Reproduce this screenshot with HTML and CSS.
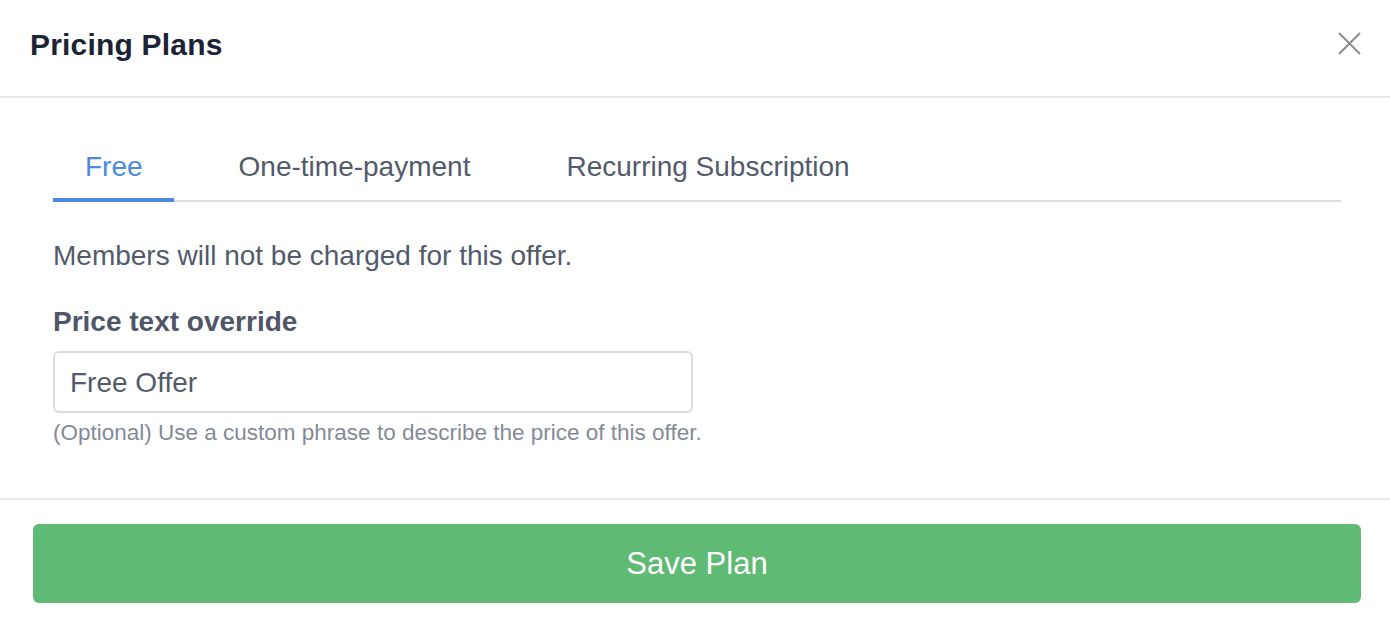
FILE: index.html
```html
<!DOCTYPE html>
<html lang="en">
<head>
<meta charset="utf-8">
<title>Pricing Plans</title>
<link rel="stylesheet" href="styles.css">
</head>
<body>
<div class="modal">
  <header class="modal-header">
    <h1 class="modal-title">Pricing Plans</h1>
    <button class="close-btn" aria-label="Close">
      <svg width="23" height="23" viewBox="0 0 23 23"><path d="M1 1 L22 22 M22 1 L1 22" stroke="#8c8c8c" stroke-width="2" fill="none"/></svg>
    </button>
  </header>
  <section class="modal-body">
    <nav class="tabs">
      <div class="tab active">Free</div>
      <div class="tab">One-time-payment</div>
      <div class="tab">Recurring Subscription</div>
    </nav>
    <p class="note">Members will not be charged for this offer.</p>
    <label class="field-label">Price text override</label>
    <div class="input">Free Offer</div>
    <p class="help">(Optional) Use a custom phrase to describe the price of this offer.</p>
  </section>
  <footer class="modal-footer">
    <button class="save-btn">Save Plan</button>
  </footer>
</div>
</body>
</html>
```

FILE: styles.css
```css
* { box-sizing: border-box; }
html, body {
  margin: 0;
  padding: 0;
  background: #ffffff;
  font-family: "Liberation Sans", Arial, sans-serif;
}
.modal {
  width: 1390px;
  height: 626px;
  overflow: hidden;
}
.modal-header {
  height: 98px;
  display: flex;
  align-items: center;
  justify-content: space-between;
  padding: 0 29px 6px 30px;
  border-bottom: 2px solid #e7e7e9;
}
.modal-title {
  margin: 0;
  font-size: 30px;
  font-weight: bold;
  color: #1d2336;
  line-height: 36px;
  letter-spacing: 0.2px;
}
.close-btn {
  border: 0;
  background: none;
  padding: 0;
  width: 23px;
  height: 23px;
  display: flex;
  margin-top: -4px;
}
.modal-body {
  padding: 52px 49px 51px 53px;
  border-bottom: 2px solid #e7e7e9;
}
.tabs {
  display: flex;
  gap: 33px;
  border-bottom: 2px solid #dcdde2;
  height: 52px;
}
.tab {
  font-size: 28px;
  line-height: 34px;
  color: #525a6b;
  padding: 0 31px 14px 32px;
  border-bottom: 4px solid transparent;
  height: 52px;
}
.tab.active {
  color: #4a8ae0;
  border-bottom-color: #4a8ae0;
}
.note {
  margin: 37px 0 0;
  font-size: 28px;
  line-height: 34px;
  color: #525a6b;
}
.field-label {
  display: block;
  margin-top: 32px;
  font-size: 28px;
  line-height: 34px;
  font-weight: bold;
  color: #4f5667;
}
.input {
  margin-top: 12px;
  width: 640px;
  height: 62px;
  border: 2px solid #dadce1;
  border-radius: 6px;
  padding: 2px 15px 0;
  display: flex;
  align-items: center;
  font-size: 28px;
  color: #525a6b;
}
.help {
  margin: 6px 0 0;
  font-size: 22.5px;
  line-height: 28px;
  color: #858a96;
}
.modal-footer {
  padding: 24px 29px 23px 33px;
}
.save-btn {
  display: block;
  width: 100%;
  height: 79px;
  border: 0;
  border-radius: 6px;
  background: #5fba74;
  color: #ffffff;
  font-family: "Liberation Sans", Arial, sans-serif;
  font-size: 31px;
}
```
